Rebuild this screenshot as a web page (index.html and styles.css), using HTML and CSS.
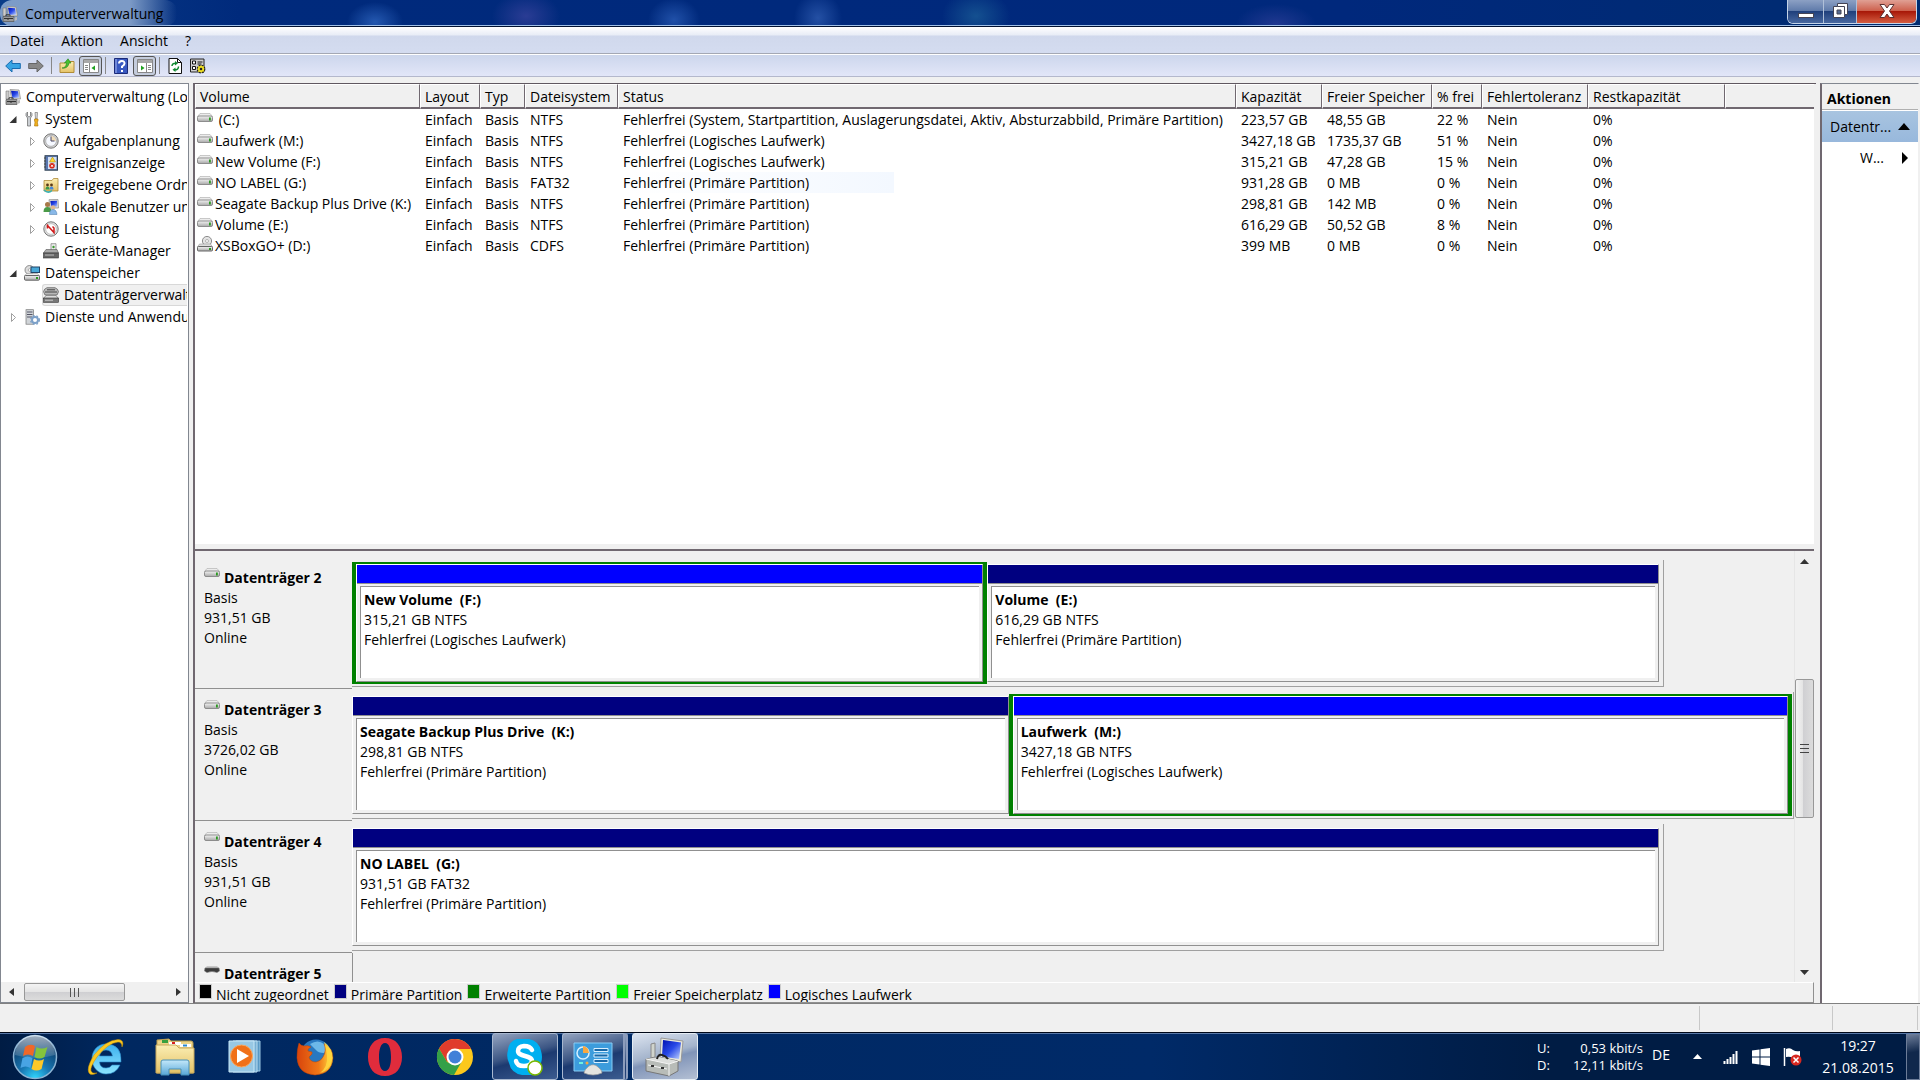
FILE: index.html
```html
<!DOCTYPE html>
<html lang="de">
<head>
    <meta charset="UTF-8">
    <meta name="viewport" content="width=device-width, initial-scale=1.0">
    <title>Computerverwaltung</title>
    <link rel="stylesheet" href="styles.css">
</head>
<body>
    <!-- shared icons -->
    <svg class="sprite" aria-hidden="true">
        <defs>
            <linearGradient id="gDrive" x1="0" y1="0" x2="0" y2="1"><stop offset="0" stop-color="#f4f4f4"/><stop offset="1" stop-color="#a8a8a8"/></linearGradient>
            <linearGradient id="gScreen" x1="0" y1="0" x2="1" y2="1"><stop offset="0" stop-color="#0010b0"/><stop offset="0.5" stop-color="#2a4ae8"/><stop offset="1" stop-color="#c0d4ff"/></linearGradient>
            <linearGradient id="gFolder" x1="0" y1="0" x2="0" y2="1"><stop offset="0" stop-color="#fbeeb4"/><stop offset="1" stop-color="#e4c266"/></linearGradient>
            <linearGradient id="gGlass" x1="0" y1="0" x2="0" y2="1"><stop offset="0" stop-color="#c4e8fa"/><stop offset="1" stop-color="#58a8d8"/></linearGradient>
            <radialGradient id="gOrb" cx="0.5" cy="1" r="0.9"><stop offset="0" stop-color="#30d8ff"/><stop offset="0.4" stop-color="#1878b4"/><stop offset="1" stop-color="#0a3460"/></radialGradient>
            <linearGradient id="gShine" x1="0" y1="0" x2="0" y2="1"><stop offset="0" stop-color="#fff" stop-opacity="0.85"/><stop offset="1" stop-color="#fff" stop-opacity="0.15"/></linearGradient>
            <linearGradient id="gIe" x1="0" y1="0" x2="0" y2="1"><stop offset="0" stop-color="#3cb0ee"/><stop offset="1" stop-color="#8ce4ff"/></linearGradient>
            <linearGradient id="gFox" x1="0" y1="0" x2="1" y2="0"><stop offset="0" stop-color="#d8440c"/><stop offset="0.6" stop-color="#f07818"/><stop offset="1" stop-color="#ffe040"/></linearGradient>
        </defs>
        <symbol id="drive" viewBox="0 0 16 10">
            <path d="M3 .5h10l2.500 3h-15z" fill="#ececec" stroke="#b4b4b4" stroke-width=".7"/>
            <rect x=".5" y="3" width="15" height="5.500" rx="1.500" fill="url(#gDrive)" stroke="#858585" stroke-width=".9"/>
            <rect x="12" y="4.500" width="1.800" height="3" fill="#2a9a20"/>
        </symbol>
        <symbol id="drive-dark" viewBox="0 0 16 10">
            <path d="M3 2h10l2.500 2.500h-15z" fill="#c8c8c8"/>
            <path d="M1 4h14l.5 3-2.500 1.500q-5-2-10 0L.5 7z" fill="#3c3c3c" stroke="#777" stroke-width=".6"/>
        </symbol>
        <symbol id="cd" viewBox="0 0 16 16">
            <circle cx="10" cy="5" r="4.600" fill="#e4e4e4" stroke="#8c8c8c"/>
            <circle cx="10" cy="5" r="1.500" fill="#fff" stroke="#999" stroke-width=".7"/>
            <path d="M2.500 8h11l2 3H.5z" fill="#ddd" stroke="#999" stroke-width=".6"/>
            <rect x=".5" y="10.500" width="15" height="4.500" rx="1" fill="url(#gDrive)" stroke="#666"/>
            <rect x="12" y="12" width="2" height="2" fill="#2a9a20"/>
        </symbol>
        <symbol id="computer" viewBox="0 0 16 16">
            <path d="M1 2h3v8H1z" fill="#ccc" stroke="#777" stroke-width=".6"/>
            <path d="M5 .5l9 .5 1.500 9-9 0z" fill="#d8d8d0" stroke="#888" stroke-width=".7"/>
            <path d="M6 1.800l7 .4 1.200 6.600-6.800 0z" fill="url(#gScreen)"/>
            <path d="M1 10.500h11v5H1z" fill="#9a9a9a" stroke="#555" stroke-width=".7"/>
            <path d="M4 10V8.800h4V10M2 12.500h9M6 12v2" stroke="#333" fill="none"/>
            <path d="M12.500 11.500l2.500-.5v3l-2.500 1z" fill="#bbb"/>
        </symbol>
        <symbol id="tools" viewBox="0 0 16 16">
            <path d="M3.500 1v4l1.500 1 1.500-1V1q2 1 1.500 3.500L6.500 7v8h-3V7L2 4.500Q1.500 2 3.500 1z" fill="#ccd0d4" stroke="#666" stroke-width=".7"/>
            <path d="M11 1.500h2.500L13 8h-1.500z" fill="#ddd" stroke="#777" stroke-width=".7"/>
            <path d="M10.500 8h3.500v2l-.7 1 .7 4h-3.500l.5-4-.5-1z" fill="#f0b020" stroke="#a87000" stroke-width=".6"/>
        </symbol>
        <symbol id="clock" viewBox="0 0 16 16">
            <circle cx="8" cy="8" r="7.200" fill="#d0d0d0" stroke="#777"/>
            <circle cx="8" cy="8" r="5.300" fill="#f6f9ff" stroke="#999" stroke-width=".6"/>
            <path d="M8 8V3a5 5 0 0 1 5 5z" fill="#f0dcb8"/>
            <path d="M8 3.500V8h3.500" fill="none" stroke="#446"/>
        </symbol>
        <symbol id="events" viewBox="0 0 16 16">
            <rect x="2" y=".7" width="12.500" height="14.500" fill="#5a78b0" stroke="#345"/>
            <rect x="5" y="2" width="8.500" height="12" fill="#d4e0f4"/>
            <path d="M1 3h2M1 6h2M1 9h2M1 12h2" stroke="#444"/>
            <path d="M9.500 2l3 5h-6z" fill="#ffd830" stroke="#a08000" stroke-width=".5"/>
            <circle cx="9" cy="10.800" r="2.800" fill="#d82818"/><path d="M8 9.800l2 2m0-2l-2 2" stroke="#fff"/>
        </symbol>
        <symbol id="share" viewBox="0 0 16 16">
            <path d="M1 3.500h8L10.500 1.500H15V14H1z" fill="url(#gFolder)" stroke="#b08c38" stroke-width=".8"/>
            <circle cx="4.500" cy="8" r="1.400" fill="#5a3818"/><path d="M2.500 12.500q0-3 2-3t2 3z" fill="#3a9a48"/>
            <circle cx="8.500" cy="8" r="1.400" fill="#5a3818"/><path d="M6.500 12.500q0-3 2-3t2 3z" fill="#4888d8"/>
            <path d="M1 13q4 4 8 .5" fill="none" stroke="#38b0b0" stroke-width="1.500"/>
        </symbol>
        <symbol id="users" viewBox="0 0 16 16">
            <path d="M6 .7l9-.2.5 8.500H7z" fill="#ddd" stroke="#888" stroke-width=".7"/><path d="M7.300 2l6.700-.2.300 6h-6z" fill="url(#gScreen)"/>
            <circle cx="4.500" cy="5.500" r="2.500" fill="#a87848"/><path d="M.5 13q0-5 4-5t4 5z" fill="#4a9a48"/>
            <circle cx="10" cy="8.500" r="2.300" fill="#e0b890"/><path d="M6.500 15.500q0-5 3.500-5t4 5z" fill="#88b8e8" stroke="#4878a8" stroke-width=".5"/>
        </symbol>
        <symbol id="perf" viewBox="0 0 16 16">
            <circle cx="8" cy="8" r="7.200" fill="#e0e0e0" stroke="#777"/>
            <circle cx="8" cy="8" r="5.300" fill="#fff" stroke="#aaa" stroke-width=".6"/>
            <path d="M4.500 7.500V4.500L11 11.500V7L9.500 5.500" fill="none" stroke="#d01818" stroke-width="1.500"/>
        </symbol>
        <symbol id="devices" viewBox="0 0 16 16">
            <path d="M8 .7h5V8H8z" fill="#eee" stroke="#777" stroke-width=".7"/><circle cx="10.500" cy="4" r="1.200" fill="#3a9a30"/>
            <path d="M3 6.500h11l1.500 3.500H.5z" fill="#aaa" stroke="#555" stroke-width=".6"/>
            <rect x=".5" y="10" width="15" height="5" fill="#666" stroke="#333" stroke-width=".6"/><path d="M2 12h9" stroke="#bbb"/>
        </symbol>
        <symbol id="storage" viewBox="0 0 16 16">
            <circle cx="5.500" cy="5" r="4.500" fill="#ddd" stroke="#777" stroke-width=".8"/><circle cx="5.500" cy="5" r="1.300" fill="#fff" stroke="#777" stroke-width=".5"/>
            <rect x="7" y="2" width="8.500" height="5.500" fill="#48a8d8" stroke="#246"/>
            <path d="M2.500 8.500h11l2 2.500H.5z" fill="#eee" stroke="#888" stroke-width=".5"/>
            <rect x=".5" y="10.500" width="15" height="4.700" rx="1" fill="url(#gDrive)" stroke="#666"/><rect x="12" y="12" width="2" height="2" fill="#2a9a20"/>
        </symbol>
        <symbol id="diskmgmt" viewBox="0 0 16 16">
            <path d="M4 .7h8q3 1 3.500 4L14 8H2L.5 4.700Q1 1.700 4 .7z" fill="#b8b8b8" stroke="#555" stroke-width=".7"/><path d="M2 5h12M4 2.800h8" stroke="#444"/>
            <path d="M3 8.500h10l2.500 3H.5z" fill="#ddd" stroke="#666" stroke-width=".6"/>
            <rect x=".5" y="11" width="15" height="4.300" fill="#777" stroke="#333" stroke-width=".6"/><path d="M2 13.200h8" stroke="#ccc"/>
        </symbol>
        <symbol id="services" viewBox="0 0 16 16">
            <rect x="2" y=".7" width="7.500" height="14.500" fill="#d0d4d8" stroke="#777" stroke-width=".7"/><path d="M3 3h5.500M3 5.500h5.500M3 8h5.500" stroke="#556"/>
            <circle cx="11" cy="11" r="3" fill="#fff" stroke="#7ca0c8" stroke-width="2"/>
            <circle cx="11" cy="11" r="4.400" fill="none" stroke="#7ca0c8" stroke-width="1.200" stroke-dasharray="1.800 1.800"/>
        </symbol>
        <symbol id="arrow" viewBox="0 0 16 16">
            <path d="M.7 8L7 2v3.500h8.300v5H7V14z"/>
        </symbol>
        <symbol id="skype" viewBox="0 0 36 38">
            <path d="M10 1h12q10 2 12 12 2 6 0 12-1 10-9 12H15Q4 35 2 25-1 19 1 12 2 3 10 1z" fill="#00aff0"/>
            <path d="M25 12q-2-4-8-4-6 .5-6 5c0 6 14 4 14 10q-1 5-8 5t-8-5" fill="none" stroke="#fff" stroke-width="4.500" stroke-linecap="round"/>
            <circle cx="28" cy="30" r="7" fill="#fff" stroke="#7ab800" stroke-width="1.500"/>
        </symbol>
    </svg>

    <div class="window">
        <header class="titlebar">
            <h1 class="title"><svg class="icon"><use href="#computer"/></svg><span>Computerverwaltung</span></h1>
            <div class="window-buttons">
                <button class="win-btn minimize" aria-label="Minimieren"><svg width="18" height="22"><rect x="1.500" y="13.500" width="15" height="4" fill="#fff" stroke="#445"/></svg></button>
                <button class="win-btn" aria-label="Verkleinern"><svg width="18" height="22"><path d="M6.500 3.500h10v11h-3v3h-11v-11h4z" fill="#fff" stroke="#445"/><path d="M6 10h4v4H6z" fill="#556a90" stroke="#445"/><path d="M6.500 6.500h7v8" fill="none" stroke="#445"/></svg></button>
                <button class="win-btn close" aria-label="Schließen"><svg width="18" height="22"><path d="M2 4.500h4.500L9 8l2.500-3.500H16L11.500 11l4.500 6.500h-4.500L9 14l-2.500 3.500H2L6.500 11z" fill="#fff" stroke="#5a3030"/></svg></button>
            </div>
        </header>

        <nav class="menubar">
            <button>Datei</button>
            <button>Aktion</button>
            <button>Ansicht</button>
            <button>?</button>
        </nav>

        <div class="toolbar">
            <button class="tool" aria-label="Zurück"><svg class="icon"><use href="#arrow" fill="#38a4e4" stroke="#1a6cb0"/></svg></button>
            <button class="tool flip" aria-label="Vorwärts"><svg class="icon"><use href="#arrow" fill="#888" stroke="#666"/></svg></button>
            <span class="divider"></span>
            <button class="tool" aria-label="Eine Ebene nach oben"><svg class="icon" viewBox="0 0 16 16"><path d="M1 5h5l1.500-1.500H15v11H1z" fill="url(#gFolder)" stroke="#b08c38"/><path d="M3 10q4 0 4.500-5H5.500L9 .8 12 5h-2q-1 6-7 5z" fill="#48c030" stroke="#208018" stroke-width=".6"/></svg></button>
            <button class="tool pressed" aria-label="Konsolenstruktur"><svg class="icon" viewBox="0 0 16 16"><path d="M.5 1.500h15v13H.5z" fill="#fff" stroke="#888"/><path d="M1 2h14v3H1z" fill="#a8a8a8"/><path d="M6.500 5v9M2 7.500h3M2 9.500h3M2 11.500h3" stroke="#888"/><path d="M12 7.500v5L8.500 10z" fill="#20a020"/></svg></button>
            <span class="divider"></span>
            <button class="tool" aria-label="Hilfe"><svg class="icon" viewBox="0 0 16 16"><path d="M1.500.5h13v15h-13z" fill="#3858c0" stroke="#1a2a78"/><path d="M2 1h2v14H2z" fill="#7088d8"/><path d="M6 5.500q0-2.500 2.800-2.500T11.500 5.500Q11.500 7 9 8.500V10M9 12v2" fill="none" stroke="#fff" stroke-width="2"/></svg></button>
            <button class="tool pressed" aria-label="Aktionsbereich"><svg class="icon" viewBox="0 0 16 16"><path d="M.5 1.500h15v13H.5z" fill="#fff" stroke="#888"/><path d="M1 2h14v3H1z" fill="#a8a8a8"/><path d="M9.500 5v9M11 7.500h3M11 9.500h3M11 11.500h3" stroke="#888"/><path d="M4 7.500v5L7.500 10z" fill="#20a020"/></svg></button>
            <span class="divider"></span>
            <button class="tool" aria-label="Aktualisieren"><svg class="icon" viewBox="0 0 16 16"><path d="M2 .5h8.500L14.500 4.500v11H2z" fill="#fff" stroke="#111"/><path d="M10.500.5v4h4" fill="none" stroke="#111"/><path d="M5 8q0-3 4-2.800M11.500 8.500q0 3.500-4 3.300" fill="none" stroke="#108830" stroke-width="1.500"/><path d="M8 3l3 2.200L8 7.500zM8.500 9.500v4.500l-3-2.200z" fill="#108830"/></svg></button>
            <button class="tool" aria-label="Einstellungen"><svg class="icon" viewBox="0 0 16 16"><path d="M.5 1h13.500v13H.5z" fill="#d0d0d0" stroke="#222"/><path d="M2.500 3h3v3h-3zM2.500 8.500h3v3h-3z" fill="#fff" stroke="#111"/><path d="M7.500 4h5M7.500 6h4" stroke="#111"/><circle cx="11" cy="11" r="3.800" fill="#f0e020" stroke="#222" stroke-width="1.200" stroke-dasharray="2 1"/><circle cx="11" cy="11" r="1.300" fill="#222"/></svg></button>
        </div>

        <main class="panes">
            <aside class="pane tree-pane">
                <ul class="tree">
                    <li class="lvl0"><svg class="icon"><use href="#computer"/></svg>Computerverwaltung (Lokal)</li>
                    <li class="lvl1"><svg class="twisty" viewBox="0 0 11 11"><path d="M8.500 2v7h-7z" fill="#333"/></svg><svg class="icon"><use href="#tools"/></svg>System</li>
                    <li class="lvl2"><svg class="twisty" viewBox="0 0 11 11"><path d="M3.500 1.500v8l4-4z" fill="#fff" stroke="#a0a0a0"/></svg><svg class="icon"><use href="#clock"/></svg>Aufgabenplanung</li>
                    <li class="lvl2"><svg class="twisty" viewBox="0 0 11 11"><path d="M3.500 1.500v8l4-4z" fill="#fff" stroke="#a0a0a0"/></svg><svg class="icon"><use href="#events"/></svg>Ereignisanzeige</li>
                    <li class="lvl2"><svg class="twisty" viewBox="0 0 11 11"><path d="M3.500 1.500v8l4-4z" fill="#fff" stroke="#a0a0a0"/></svg><svg class="icon"><use href="#share"/></svg>Freigegebene Ordner</li>
                    <li class="lvl2"><svg class="twisty" viewBox="0 0 11 11"><path d="M3.500 1.500v8l4-4z" fill="#fff" stroke="#a0a0a0"/></svg><svg class="icon"><use href="#users"/></svg>Lokale Benutzer und Gruppen</li>
                    <li class="lvl2"><svg class="twisty" viewBox="0 0 11 11"><path d="M3.500 1.500v8l4-4z" fill="#fff" stroke="#a0a0a0"/></svg><svg class="icon"><use href="#perf"/></svg>Leistung</li>
                    <li class="lvl2"><svg class="twisty"></svg><svg class="icon"><use href="#devices"/></svg>Geräte-Manager</li>
                    <li class="lvl1"><svg class="twisty" viewBox="0 0 11 11"><path d="M8.500 2v7h-7z" fill="#333"/></svg><svg class="icon"><use href="#storage"/></svg>Datenspeicher</li>
                    <li class="lvl2"><svg class="twisty"></svg><span class="selected"><svg class="icon"><use href="#diskmgmt"/></svg>Datenträgerverwaltung</span></li>
                    <li class="lvl1"><svg class="twisty" viewBox="0 0 11 11"><path d="M3.500 1.500v8l4-4z" fill="#fff" stroke="#a0a0a0"/></svg><svg class="icon"><use href="#services"/></svg>Dienste und Anwendungen</li>
                </ul>
                <div class="hscroll">
                    <button class="scroll-btn" aria-label="Nach links"><svg width="5" height="8"><path d="M5 0v8L0 4z" fill="#333"/></svg></button>
                    <div class="hthumb"><svg width="12" height="9"><path d="M1.500 0v9M5.500 0v9M9.500 0v9" stroke="#555"/></svg></div>
                    <button class="scroll-btn" aria-label="Nach rechts"><svg width="5" height="8"><path d="M0 0v8l5-4z" fill="#333"/></svg></button>
                </div>
            </aside>

            <section class="pane content">
                <div class="volume-list">
                    <table class="volume-table">
                        <colgroup>
                            <col class="c-volume"><col class="c-layout"><col class="c-typ"><col class="c-fs"><col class="c-status">
                            <col class="c-kap"><col class="c-frei"><col class="c-pct"><col class="c-tol"><col class="c-rest"><col>
                        </colgroup>
                        <thead>
                            <tr><th>Volume</th><th>Layout</th><th>Typ</th><th>Dateisystem</th><th>Status</th><th>Kapazität</th><th>Freier Speicher</th><th>% frei</th><th>Fehlertoleranz</th><th>Restkapazität</th><th></th></tr>
                        </thead>
                        <tbody>
                            <tr><td><svg class="drive"><use href="#drive"/></svg>&nbsp;(C:)</td><td>Einfach</td><td>Basis</td><td>NTFS</td><td>Fehlerfrei (System, Startpartition, Auslagerungsdatei, Aktiv, Absturzabbild, Primäre Partition)</td><td>223,57 GB</td><td>48,55 GB</td><td>22 %</td><td>Nein</td><td>0%</td><td></td></tr>
                            <tr><td><svg class="drive"><use href="#drive"/></svg>Laufwerk (M:)</td><td>Einfach</td><td>Basis</td><td>NTFS</td><td>Fehlerfrei (Logisches Laufwerk)</td><td>3427,18 GB</td><td>1735,37 GB</td><td>51 %</td><td>Nein</td><td>0%</td><td></td></tr>
                            <tr><td><svg class="drive"><use href="#drive"/></svg>New Volume (F:)</td><td>Einfach</td><td>Basis</td><td>NTFS</td><td>Fehlerfrei (Logisches Laufwerk)</td><td>315,21 GB</td><td>47,28 GB</td><td>15 %</td><td>Nein</td><td>0%</td><td></td></tr>
                            <tr><td><svg class="drive"><use href="#drive"/></svg>NO LABEL (G:)</td><td>Einfach</td><td>Basis</td><td>FAT32</td><td class="fading">Fehlerfrei (Primäre Partition)</td><td>931,28 GB</td><td>0 MB</td><td>0 %</td><td>Nein</td><td>0%</td><td></td></tr>
                            <tr><td><svg class="drive"><use href="#drive"/></svg>Seagate Backup Plus Drive (K:)</td><td>Einfach</td><td>Basis</td><td>NTFS</td><td>Fehlerfrei (Primäre Partition)</td><td>298,81 GB</td><td>142 MB</td><td>0 %</td><td>Nein</td><td>0%</td><td></td></tr>
                            <tr><td><svg class="drive"><use href="#drive"/></svg>Volume (E:)</td><td>Einfach</td><td>Basis</td><td>NTFS</td><td>Fehlerfrei (Primäre Partition)</td><td>616,29 GB</td><td>50,52 GB</td><td>8 %</td><td>Nein</td><td>0%</td><td></td></tr>
                            <tr><td><svg class="drive cd"><use href="#cd"/></svg>XSBoxGO+ (D:)</td><td>Einfach</td><td>Basis</td><td>CDFS</td><td>Fehlerfrei (Primäre Partition)</td><td>399 MB</td><td>0 MB</td><td>0 %</td><td>Nein</td><td>0%</td><td></td></tr>
                        </tbody>
                    </table>
                </div>
                <div class="splitter"></div>

                <div class="disk-view">
                    <div class="disks">
                        <div class="disk">
                            <div class="disk-label"><h2><svg class="drive"><use href="#drive"/></svg>Datenträger 2</h2><p>Basis</p><p>931,51 GB</p><p>Online</p></div>
                            <div class="track"><div class="volumes" style="width: 91%">
                                <div class="extended" style="width: 48.6%">
                                    <div class="volume logical"><div class="bar"></div><div class="body"><h3>New Volume&nbsp; (F:)</h3><p>315,21 GB NTFS</p><p>Fehlerfrei (Logisches Laufwerk)</p></div></div>
                                </div>
                                <div class="volume primary"><div class="bar"></div><div class="body"><h3>Volume&nbsp; (E:)</h3><p>616,29 GB NTFS</p><p>Fehlerfrei (Primäre Partition)</p></div></div>
                            </div></div>
                        </div>
                        <div class="disk">
                            <div class="disk-label"><h2><svg class="drive"><use href="#drive"/></svg>Datenträger 3</h2><p>Basis</p><p>3726,02 GB</p><p>Online</p></div>
                            <div class="track"><div class="volumes full" style="width: 100%">
                                <div class="volume primary"><div class="bar"></div><div class="body"><h3>Seagate Backup Plus Drive&nbsp; (K:)</h3><p>298,81 GB NTFS</p><p>Fehlerfrei (Primäre Partition)</p></div></div>
                                <div class="extended" style="width: 54.4%">
                                    <div class="volume logical"><div class="bar"></div><div class="body"><h3>Laufwerk&nbsp; (M:)</h3><p>3427,18 GB NTFS</p><p>Fehlerfrei (Logisches Laufwerk)</p></div></div>
                                </div>
                            </div></div>
                        </div>
                        <div class="disk">
                            <div class="disk-label"><h2><svg class="drive"><use href="#drive"/></svg>Datenträger 4</h2><p>Basis</p><p>931,51 GB</p><p>Online</p></div>
                            <div class="track"><div class="volumes" style="width: 91%">
                                <div class="volume primary"><div class="bar"></div><div class="body"><h3>NO LABEL&nbsp; (G:)</h3><p>931,51 GB FAT32</p><p>Fehlerfrei (Primäre Partition)</p></div></div>
                            </div></div>
                        </div>
                        <div class="disk">
                            <div class="disk-label"><h2><svg class="drive"><use href="#drive-dark"/></svg>Datenträger 5</h2></div>
                            <div class="track empty"></div>
                        </div>
                    </div>
                    <div class="vscroll">
                        <button class="scroll-btn" aria-label="Nach oben"><svg width="9" height="5"><path d="M0 5h9L4.500 0z" fill="#333"/></svg></button>
                        <div class="vthumb"><svg width="9" height="12"><path d="M0 1.500h9M0 5.500h9M0 9.500h9" stroke="#444"/></svg></div>
                        <button class="scroll-btn" aria-label="Nach unten"><svg width="9" height="5"><path d="M0 0h9L4.500 5z" fill="#333"/></svg></button>
                    </div>
                </div>

                <ul class="legend">
                    <li><i class="swatch unallocated"></i>Nicht zugeordnet</li>
                    <li><i class="swatch primary"></i>Primäre Partition</li>
                    <li><i class="swatch ext"></i>Erweiterte Partition</li>
                    <li><i class="swatch free"></i>Freier Speicherplatz</li>
                    <li><i class="swatch logical"></i>Logisches Laufwerk</li>
                </ul>
            </section>

            <aside class="pane actions">
                <h2>Aktionen</h2>
                <button class="action-group">Datentr...<svg width="12" height="7"><path d="M0 7h12L6 0z"/></svg></button>
                <button class="action-item">W...<svg width="6" height="12"><path d="M0 0v12l6-6z"/></svg></button>
            </aside>
        </main>

        <footer class="statusbar"><span class="cell-a"></span><span class="cell-b"></span></footer>
    </div>

    <footer class="taskbar">
        <button class="start" aria-label="Start">
            <svg width="46" height="46" viewBox="0 0 46 46">
                <circle cx="23" cy="23" r="21.500" fill="url(#gOrb)" stroke="#8cb4d4" stroke-width="1.500"/>
                <path d="M3 21a20 20 0 0 1 40 0q-20 6-40 0z" fill="url(#gShine)" opacity=".75"/>
                <path d="M13 13q5-4 10-1l-2 10q-5-3-10 0z" fill="#f06828"/>
                <path d="M24.500 13q5 3 11 0l-3 10q-5 3-10 0z" fill="#84c43c"/>
                <path d="M10.500 24q5-3 10 0l-2 10q-5-3-10 0z" fill="#48a4e4"/>
                <path d="M22 25q5 3 10 0l-2.500 10q-5 3-10 0z" fill="#fcc828"/>
            </svg>
        </button>
        <button class="task" aria-label="Internet Explorer">
            <svg width="38" height="40" viewBox="0 0 38 40">
                <path fill-rule="evenodd" d="M20 7C11 7 6 14 6 22s6 15 14 15q10 0 14-9h-8q-2 3-6 3-6 0-6.500-6H35Q36 7 20 7zM13.500 19q1-6 6.500-6t6.500 6z" fill="url(#gIe)" stroke="#2888c8" stroke-width=".6"/>
                <path d="M36 10Q39 3 32 2.500 20 3 8 18 0 31 3 36q2 3 8 0-5 1-6-2-1-4 6-14Q22 6 32 5q4 0 4 5z" fill="#fcc820" stroke="#c89000" stroke-width=".5"/>
            </svg>
        </button>
        <button class="task" aria-label="Explorer">
            <svg width="40" height="40" viewBox="0 0 40 40">
                <path d="M2 3l12-1 2 2h20q2 0 2 2v30H2z" fill="#ecd488" stroke="#b89c50"/>
                <path d="M7 3h6v3H7z" fill="#38a040"/><path d="M14 5h12v3H14z" fill="#fff"/><path d="M17 5h3v2h-3z" fill="#d82020"/><path d="M25 7h11v3H25z" fill="#fff"/><path d="M28 7.500h4v2h-4z" fill="#2888d0"/>
                <path d="M1 8h20l3 3h15v25H1z" fill="url(#gFolder)" stroke="#c8a85c"/>
                <path d="M6 25q0-2 2-2h24q2 0 2 2v13h-8v-6H14v6H6z" fill="url(#gGlass)" stroke="#4890b8"/>
            </svg>
        </button>
        <button class="task" aria-label="Media Player">
            <svg width="34" height="36" viewBox="0 0 34 36">
                <path d="M8 2h24v30H8z" fill="#5898c4" stroke="#9cc8e4"/><path d="M5 2h24v31H5z" fill="#78b0d4" stroke="#b8dcf0"/>
                <path d="M1 2h25v31H1z" fill="#98c8e4" stroke="#c8e8f8"/>
                <circle cx="13.500" cy="17" r="11" fill="#f07018" stroke="#f8a860"/><path d="M9 10v14l12-7z" fill="#fff"/>
            </svg>
        </button>
        <button class="task" aria-label="Firefox">
            <svg width="38" height="38" viewBox="0 0 38 38">
                <circle cx="20" cy="17" r="15.500" fill="#2878c0"/><path d="M14 6q8-5 14 0 5 5 0 9-6 0-8-3z" fill="#6cb8e8"/>
                <path d="M3 5q2 3 5 3 4-1 7 1-4 2-3 4l4 1q1 2-3 5 1 5 7 5 5-1 7-5 4-7 1-13 9 4 9 14Q36 36 19 37 2 36 1 20 1 11 3 5z" fill="url(#gFox)" stroke="#c04000" stroke-width=".5"/>
                <path d="M28 4q9 6 8 17-2 11-12 14 8-6 7-17-1-9-3-14z" fill="#ffd840" opacity=".85"/>
            </svg>
        </button>
        <button class="task" aria-label="Opera">
            <svg width="36" height="38" viewBox="0 0 36 38"><path fill-rule="evenodd" d="M18 0C7 0 1 8 1 19s6 19 17 19 17-8 17-19S29 0 18 0zm0 5c4.500 0 6 7 6 14s-1.500 14-6 14-6-7-6-14 1.500-14 6-14z" fill="#e02c3c"/></svg>
        </button>
        <button class="task" aria-label="Chrome">
            <svg width="38" height="38" viewBox="0 0 38 38">
                <circle cx="19" cy="19" r="18" fill="#fcc81c"/>
                <path d="M3 10.500A18 18 0 0 1 35 11H19L11 24z" fill="#e03c2c"/>
                <path d="M3 10.500A18 18 0 0 0 18 37l8-14-7 4-8-3z" fill="#34a048"/>
                <circle cx="19" cy="19" r="8.500" fill="#fff"/><circle cx="19" cy="19" r="6.500" fill="#4080d8"/>
            </svg>
        </button>
        <button class="task running" aria-label="Skype"><svg width="36" height="38"><use href="#skype"/></svg></button>
        <button class="task running stacked" aria-label="Systemsteuerung">
            <svg width="40" height="38" viewBox="0 0 40 38">
                <path d="M1 5h38v28H1z" fill="#3c9cdc" stroke="#88ccf4"/>
                <circle cx="10" cy="15" r="6" fill="none" stroke="#d8f0ff" stroke-width="1.500"/><path d="M10 15V8a7 7 0 0 1 6 7z" fill="#f8a840"/>
                <path d="M21 10.500h14v3H21zM21 16h14v3H21zM21 21.500h14v3H21z" fill="#1868a8" stroke="#d8f0ff"/>
                <path d="M6 25h4" stroke="#70f0e0" stroke-width="2"/><circle cx="14" cy="25" r="1.500" fill="#f8a840"/>
                <path d="M11 35q0-3 5-7 5-3 9 1 4 3 4 6-9 4-18 0z" fill="#e4e4e0" stroke="#999" stroke-width=".7"/>
            </svg>
        </button>
        <button class="task running active" aria-label="Computerverwaltung">
            <svg width="40" height="40" viewBox="0 0 40 40">
                <path d="M6 7l4-1v14l-4 1z" fill="#d0d4cc" stroke="#888"/>
                <path d="M16 1l22 3-2 21-21-3z" fill="#e8e8dc" stroke="#999"/><path d="M18 3l18 2.500-2 16.500-17-2.500z" fill="url(#gScreen)"/>
                <path d="M1 22l13-2 19 4v10l-9 5L1 34z" fill="#b8bcb8" stroke="#777"/><path d="M1 22l13-2 19 4-9 3z" fill="#dcdedc"/><path d="M1 22l23 5 9-3M24 27v12M3 28l19 4" fill="none" stroke="#f4f4f4"/>
                <path d="M12 22q1-5 5-4t6 4" fill="none" stroke="#222" stroke-width="2"/><path d="M6 28h3v2H6zM16 30h3v2h-3z" fill="#333"/>
            </svg>
        </button>

        <div class="tray">
            <dl class="traffic"><dt>U:</dt><dd>0,53 kbit/s</dd><dt>D:</dt><dd>12,11 kbit/s</dd></dl>
            <button class="lang">DE</button>
            <button class="tray-icon more" aria-label="Ausgeblendete Symbole"><svg width="9" height="5"><path d="M0 5h9L4.500 0z" fill="#fff"/></svg></button>
            <button class="tray-icon" aria-label="Netzwerk"><svg width="16" height="14"><path d="M1.500 14v-3M4.500 14v-5M7.500 14V7M10.500 14V4M13.500 14V1" stroke="#fff" stroke-width="2"/></svg></button>
            <button class="tray-icon" aria-label="Windows"><svg width="18" height="18"><path d="M0 2.500L7.500 1.500V8.500H0zM8.500 1.300L18 0v8.500H8.500zM0 9.500h7.500v7L0 15.500zM8.500 9.500H18V18l-9.500-1.300z" fill="#fff"/></svg></button>
            <button class="tray-icon" aria-label="Wartungscenter"><svg width="20" height="20"><path d="M1.500 1v18" stroke="#fff" stroke-width="1.500"/><path d="M3 2q4-2 7 1 3 2 7 1v8q-4 1-7-1-3-2-7-1z" fill="#fff"/><circle cx="13" cy="13" r="5.500" fill="#d82820"/><path d="M10.500 10.500l5 5m0-5l-5 5" stroke="#fff" stroke-width="1.500"/></svg></button>
            <time class="clock" datetime="2015-08-21T19:27">19:27<br>21.08.2015</time>
            <button class="show-desktop" aria-label="Desktop anzeigen"></button>
        </div>
    </footer>
</body>
</html>
```

FILE: styles.css
```css
* {
    box-sizing: border-box;
}
body {
    margin: 0;
    height: 100vh;
    display: flex;
    flex-direction: column;
    overflow: hidden;
    font-family: "Open Sans", "Noto Sans", sans-serif;
    font-size: 14px;
    line-height: 20px;
    color: #000;
    background-color: #f0f0f0;
}
button {
    font: inherit;
    color: inherit;
    background: none;
    border: none;
    padding: 0;
    margin: 0;
}
h1, h2, h3, p, ul, dl, dd {
    margin: 0;
    padding: 0;
    font-size: 14px;
    list-style: none;
}
svg {
    display: block;
    flex: none;
}
.sprite {
    position: absolute;
    width: 0;
    height: 0;
}
.icon {
    width: 16px;
    height: 16px;
}
.drive {
    width: 16px;
    height: 10px;
}
.window {
    flex: 1;
    min-height: 0;
    display: flex;
    flex-direction: column;
}

/* title bar */
.titlebar {
    height: 27px;
    flex: none;
    display: flex;
    justify-content: space-between;
    border-bottom: 1px solid #001030;
    box-shadow: inset 0 -1px #a0c0e8;
    background:
        radial-gradient(ellipse 28px 20px at 375px 22px, #2458b0, transparent),
        radial-gradient(ellipse 34px 24px at 526px 16px, #2a3c94, transparent),
        radial-gradient(ellipse 26px 22px at 674px 20px, #2050a8, transparent),
        radial-gradient(ellipse 24px 26px at 818px 18px, #2450a4, transparent),
        radial-gradient(ellipse 34px 26px at 976px 16px, #145090, transparent),
        radial-gradient(ellipse 40px 20px at 1276px 24px, #203890, transparent),
        linear-gradient(90deg, #0a3c88, #002a7c 240px, #00287c 70%, #002c70);
}
.title {
    display: flex;
    align-items: center;
    gap: 7px;
    height: 26px;
    padding: 2px 14px 0 2px;
    font-weight: normal;
    background: linear-gradient(90deg, #7c9cc8, #7c9ac6 130px, transparent);
    border-radius: 12px;
}
.window-buttons {
    display: flex;
    height: 24px;
    margin-right: 3px;
    border: 1px solid #c4d4e8;
    border-top: none;
    border-radius: 0 0 6px 6px;
    overflow: hidden;
}
.win-btn {
    width: 33px;
    display: flex;
    justify-content: center;
    border-right: 1px solid #b0c0d8;
    background: linear-gradient(#8ca0c4, #5c78a8 50%, #20407c 50%, #4868a0);
}
.win-btn.minimize {
    width: 36px;
}
.win-btn.close {
    width: 59px;
    border-right: none;
    background: linear-gradient(#e0a094, #cc5c48 50%, #a81808 50%, #d45c40);
}

/* menu and toolbar */
.menubar {
    height: 27px;
    flex: none;
    display: flex;
    gap: 15px;
    padding: 2px 0 0 9px;
    background: linear-gradient(#fff, #e8ecf6 8px, #d0d8ec 9px, #d4dcf0);
    border-bottom: 1px solid #a4a8b4;
}
.menubar button {
    padding: 0 1px;
}
.toolbar {
    height: 23px;
    flex: none;
    display: flex;
    align-items: center;
    gap: 7px;
    padding-left: 5px;
    border-top: 1px solid #fff;
    border-bottom: 1px solid #b4b8cc;
    background: linear-gradient(#ccd6ec, #e2e6f8);
}
.tool {
    display: flex;
    align-items: center;
    justify-content: center;
}
.tool.pressed {
    width: 23px;
    height: 20px;
    margin: 0 -4px 0 -3px;
    border: 1px solid #555;
    border-radius: 3px;
    background-color: #c4ccdc;
}
.flip svg {
    transform: scaleX(-1);
}
.divider {
    width: 1px;
    height: 17px;
    background-color: #888;
}

/* panes */
.panes {
    flex: 1;
    min-height: 0;
    display: grid;
    grid-template-columns: 189px 1fr 99px;
    gap: 4px;
    padding: 6px 1px 0 0;
    border-bottom: 1px solid #808080;
}
.pane {
    min-width: 0;
    min-height: 0;
    display: flex;
    flex-direction: column;
    border: 1px solid #828790;
    border-bottom: none;
}
.tree-pane {
    background-color: #fff;
    overflow: hidden;
    border-bottom: 1px solid #828790;
}
.tree {
    flex: 1;
    margin-right: 1px;
    padding: 2px 0 0;
    overflow: hidden;
}
.tree li {
    height: 22px;
    display: flex;
    align-items: center;
    gap: 5px;
    white-space: nowrap;
}
.tree .lvl0 {
    padding-left: 4px;
}
.tree .lvl1 {
    padding-left: 7px;
}
.tree .lvl2 {
    padding-left: 26px;
}
.twisty {
    width: 11px;
    height: 11px;
}
.selected {
    height: 22px;
    flex: 1;
    display: flex;
    align-items: center;
    gap: 5px;
    background-color: #f0f0f0;
    border: 1px solid #d8d8d8;
    border-right: none;
    border-radius: 3px 0 0 3px;
    margin-left: -1px;
}

/* scroll bars */
.hscroll {
    height: 20px;
    flex: none;
    display: flex;
    align-items: center;
    background-color: #f0f0f0;
}
.scroll-btn {
    min-width: 20px;
    min-height: 20px;
    display: flex;
    align-items: center;
    justify-content: center;
}
.hscroll .scroll-btn:last-child {
    margin-left: auto;
}
.hthumb {
    width: 101px;
    height: 18px;
    margin-left: 3px;
    display: flex;
    align-items: center;
    justify-content: center;
    border: 1px solid #989898;
    border-radius: 2px;
    background: linear-gradient(#f4f4f4, #e4e4e4 50%, #cfcfd2 50%, #dcdcdc);
}
.vscroll {
    width: 20px;
    flex: none;
    display: flex;
    flex-direction: column;
    align-items: center;
    border-left: 1px solid #e6e6e6;
}
.vthumb {
    width: 19px;
    height: 139px;
    margin-top: 108px;
    display: flex;
    align-items: center;
    justify-content: center;
    border: 1px solid #989898;
    border-radius: 2px;
    background: linear-gradient(90deg, #f4f4f4, #e4e4e4 40%, #cfcfd2 40%, #dcdcdc);
}
.vscroll .scroll-btn:last-child {
    margin-top: auto;
}

/* volume list */
.content {
    padding-right: 2px;
    border-left: 2px solid #706870;
    border-right: none;
    border-top: 1px solid #605860;
}
.volume-list {
    height: 460px;
    flex: none;
    background-color: #fff;
    overflow: hidden;
}
.volume-table {
    width: 100%;
    table-layout: fixed;
    border-collapse: separate;
    border-spacing: 0;
}
.c-volume { width: 225px; }
.c-layout { width: 60px; }
.c-typ { width: 45px; }
.c-fs { width: 93px; }
.c-status { width: 618px; }
.c-kap { width: 86px; }
.c-frei { width: 110px; }
.c-pct { width: 50px; }
.c-tol { width: 106px; }
.c-rest { width: 137px; }
.volume-table th {
    height: 25px;
    padding: 2px 0 0 4px;
    text-align: left;
    font-weight: normal;
    white-space: nowrap;
    background-color: #f0f0f0;
    border-top: 1px solid #fff;
    border-right: 1px solid #706870;
    border-bottom: 2px solid #706870;
    border-left: 1px solid #fff;
}
.volume-table th:last-child {
    border-right: none;
}
.volume-table td {
    height: 21px;
    padding: 0 0 0 5px;
    white-space: nowrap;
}
.volume-table td:first-child {
    display: flex;
    gap: 2px;
    padding: 1px 0 0 2px;
}
.volume-table .drive {
    margin-top: 3px;
}
.volume-table .cd {
    height: 16px;
    margin-top: 0;
}
.fading {
    background: linear-gradient(90deg, #fff, #f3f8ff) no-repeat 8px 0 / 268px 21px;
}
.splitter {
    height: 7px;
    flex: none;
    background-color: #f0f0f0;
    border-bottom: 2px solid #706870;
}

/* graphical disk view */
.disk-view {
    flex: 1;
    min-height: 0;
    display: flex;
    overflow: hidden;
}
.disks {
    flex: 1;
    min-width: 0;
    padding-top: 6px;
    overflow: hidden;
}
.disk {
    height: 132px;
    display: flex;
}
.disk-label {
    width: 157px;
    flex: none;
    padding: 11px 0 0 9px;
    border-bottom: 1px solid #909090;
}
.disk-label h2 {
    display: flex;
    gap: 4px;
}
.volume h3 {
    font-weight: bold;
}
.track {
    flex: 1;
    min-width: 0;
    padding-top: 3px;
}
.track.empty {
    border-left: 1px solid #909090;
}
.volumes {
    height: 127px;
    display: flex;
    padding: 2px 4px 2px 0;
    border: 1px solid #a0a0a0;
    border-width: 0 1px 1px 0;
}
.volumes.full {
    padding-right: 1px;
}
.extended {
    flex: none;
    display: flex;
    border: solid #008000;
    border-width: 2px 4px 2px 4px;
}
.volume {
    flex: 1;
    min-width: 0;
    display: flex;
    flex-direction: column;
    border: 1px solid #fff;
    border-right-color: #909090;
    border-bottom-color: #909090;
}
.volumes > .volume {
    margin: 2px 0;
}
.bar {
    height: 19px;
    border-bottom: 1px solid #909090;
}
.primary > .bar, .swatch.primary {
    background-color: #000080;
}
.logical > .bar, .swatch.logical {
    background-color: #0000ff;
}
.body {
    flex: 1;
    margin: 2px 3px 3px;
    padding: 3px 0 0 3px;
    border-top: 1px solid #909090;
    border-left: 1px solid #909090;
    background-color: #fff;
    white-space: nowrap;
}

/* legend */
.legend {
    height: 21px;
    flex: none;
    display: flex;
    gap: 6px;
    padding-left: 5px;
    overflow: hidden;
    border-top: 1px solid #fff;
    border-right: 1px solid #909090;
    border-bottom: 1px solid #909090;
}
.legend li {
    display: flex;
    gap: 5px;
    padding-top: 2px;
}
.swatch {
    width: 11px;
    height: 13px;
    outline: 1px solid #ccc;
}
.swatch.unallocated {
    background-color: #000;
}
.swatch.ext {
    background-color: #008000;
}
.swatch.free {
    background-color: #00ff00;
}

/* actions */
.actions {
    border-left: 2px solid #706870;
    border-right-color: #f0f0f0;
    background-color: #fff;
}
.actions h2 {
    height: 26px;
    padding: 5px 0 0 5px;
    background-color: #f0f0f0;
    border-bottom: 1px solid #b0b0b0;
}
.action-group, .action-item {
    height: 31px;
    display: flex;
    align-items: center;
    justify-content: space-between;
    padding: 0 8px;
}
.action-group {
    margin-top: 1px;
    background: linear-gradient(#a8c4e0, #98b8dc);
}
.action-item {
    padding-left: 38px;
    padding-right: 10px;
}

/* status bar */
.statusbar {
    height: 28px;
    flex: none;
    display: flex;
    justify-content: flex-end;
    padding: 2px 2px 2px 0;
}
.statusbar span {
    border: solid #c8c8c8;
    border-width: 0 0 0 1px;
}
.cell-a {
    width: 133px;
}
.statusbar .cell-b {
    width: 86px;
    border-right-width: 1px;
}

/* taskbar */
.taskbar {
    height: 48px;
    flex: none;
    display: flex;
    gap: 4px;
    padding-left: 1px;
    color: #fff;
    background: linear-gradient(90deg, #001c44, #002860 120px, #002a68 60%, #001c44 80%);
    border-top: 1px solid #000818;
    box-shadow: inset 0 1px #5878a8;
}
.start {
    width: 67px;
    display: flex;
    align-items: center;
    justify-content: center;
}
.task {
    width: 66px;
    display: flex;
    align-items: center;
    justify-content: center;
    border-radius: 3px;
}
.running {
    border: 1px solid #a8b8d0;
    background: linear-gradient(165deg, #94a4c0, #3c5684 45%, #1c3a70 55%, #3c5c90);
}
.stacked {
    border-right: 5px double #8c9cbc;
}
.active {
    border-color: #e4ecf4;
    background: linear-gradient(165deg, #dce4f0, #a4b4cc 45%, #8094b8 55%, #b4c0d4);
}
.tray {
    margin-left: auto;
    display: flex;
    align-items: center;
}
.traffic {
    display: grid;
    grid-template-columns: 20px 86px;
    line-height: 17px;
    margin-right: 9px;
}
.traffic dt, .traffic dd {
    font-size: 13px;
}
.traffic dd {
    text-align: right;
}
.lang {
    margin-right: 23px;
    padding-bottom: 4px;
}
.tray-icon {
    margin-right: 13px;
}
.tray-icon.more {
    margin-right: 21px;
}
.clock {
    width: 84px;
    margin-right: 6px;
    text-align: center;
    line-height: 22px;
}
.show-desktop {
    width: 14px;
    height: 46px;
    border: 1px solid #6c7c98;
    background: linear-gradient(170deg, #6c7c98, #10284c 40%);
}
```
